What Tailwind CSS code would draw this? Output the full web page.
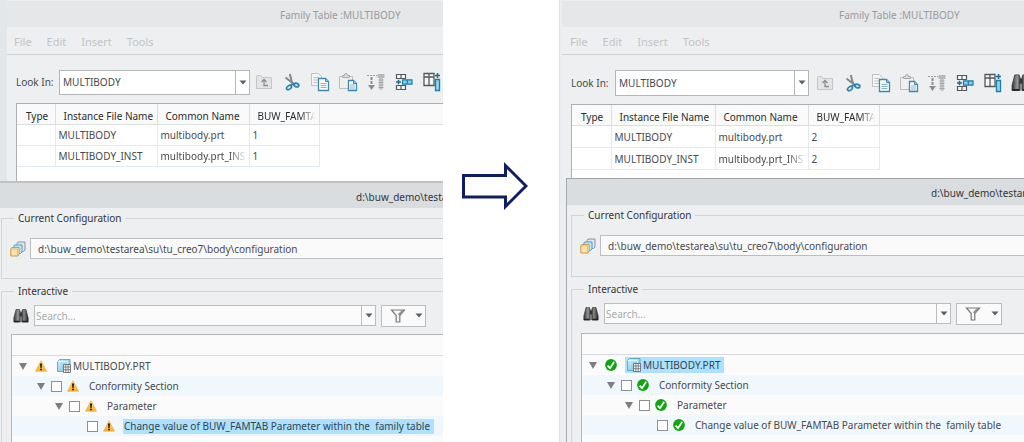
<!DOCTYPE html>
<html lang="en">
<head>
<meta charset="utf-8">
<title>Family Table: before and after</title>
<script src="https://cdn.jsdelivr.net/npm/@tailwindcss/browser@4"></script>
</head>
<body class="bg-white font-['Noto_Sans',sans-serif] text-[10px] leading-4 text-[#484a4c]">

<svg class="absolute size-0" aria-hidden="true">
  <defs>
    <linearGradient id="cube" x1="0" y1="0" x2="1" y2="1"><stop offset="0" stop-color="#d3f1fa"/><stop offset="1" stop-color="#6cc0df"/></linearGradient>
    <linearGradient id="metal" x1="0" y1="0" x2="1" y2="0"><stop offset="0" stop-color="#333"/><stop offset=".3" stop-color="#999"/><stop offset=".5" stop-color="#222"/><stop offset=".7" stop-color="#888"/><stop offset="1" stop-color="#222"/></linearGradient>
    <linearGradient id="amber" x1="0" y1="0" x2="0" y2="1"><stop offset="0" stop-color="#ffd978"/><stop offset="1" stop-color="#fbae2c"/></linearGradient>
  </defs>
  <symbol id="i-folder" viewBox="0 0 18 18"><path d="M1.500 15.500V3.500q0-1 1-1h3l1.500 2h9.500v11z" fill="#e4e5e6" stroke="#c3c5c7"/><path d="M6.500 9L9 6.500 11.500 9M9 7v5.500h4" fill="none" stroke="#8b8d8f" stroke-width="1.300"/></symbol>
  <symbol id="i-cut" viewBox="0 0 18 18"><path d="M6.800 1L9.500 11.500M2.500 4.500L12 12" stroke="#85898c" stroke-width="2" fill="none"/><ellipse cx="13.300" cy="12" rx="2.600" ry="1.700" fill="none" stroke="#2b83ab" stroke-width="1.700" transform="rotate(20 13.300 12)"/><ellipse cx="6" cy="14.500" rx="2.800" ry="1.700" fill="none" stroke="#2b83ab" stroke-width="1.700" transform="rotate(-35 6 14.500)"/><path d="M7.500 12.500L11 10.500" stroke="#2b83ab" stroke-width="1.500"/></symbol>
  <symbol id="i-copy" viewBox="0 0 20 20"><path d="M1.500 1.500h7l3 3v9h-10z" fill="#f5f5f5" stroke="#bfc1c3"/><path d="M3.500 5.500h5M3.500 8h5M3.500 10.500h5" stroke="#bfc1c3"/><path d="M8.500 6.500h7l3 3v9h-10z" fill="#fff" stroke="#3f88ab" stroke-width="1.300"/><path d="M15.500 6.500v3h3" fill="#9fd4ea" stroke="#3f88ab"/><path d="M10.500 11.500h6M10.500 13.500h6M10.500 15.500h6" stroke="#86b2c9"/></symbol>
  <symbol id="i-paste" viewBox="0 0 20 20"><path d="M1.500 4.500h13v12h-13z" fill="#f0f0f0" stroke="#bcbec0"/><path d="M4.500 5.500v-2h2q0-2 1.500-2t1.500 2h2v2z" fill="#ddd" stroke="#a8aaac"/><path d="M10.500 8.500h5l3 3v7h-8z" fill="#fff" stroke="#3f88ab" stroke-width="1.300"/><path d="M15.500 8.500v3h3" fill="#9fd4ea" stroke="#3f88ab"/><path d="M12 13h5M12 15h5M12 17h5" stroke="#86b2c9"/></symbol>
  <symbol id="i-bolt" viewBox="0 0 20 20"><path d="M1 3.500h10" stroke="#9a9c9e" stroke-dasharray="2 1"/><path d="M5.500 5v8" stroke="#8d8f91" stroke-width="2" stroke-dasharray="3 1"/><path d="M2 13h7l-3.500 5z" fill="#8d8f91"/><path d="M11.500 2h7v4h-7z" fill="#b6b8ba"/><path d="M13 6h4v11l-2 1.500-2-1.500z" fill="#c5c7c9"/><path d="M12.500 8h5M12.500 10.500h5M12.500 13h5M12.500 15.500h5" stroke="#a3a5a7"/></symbol>
  <symbol id="i-row" viewBox="0 0 18 18"><path d="M1.500 1.500h9v4h-9zM6 1.500v4M1.500 12.500h9v4h-9zM6 12.500v4" fill="#f7f7f7" stroke="#55585a" stroke-width="1.200"/><path d="M7.500 6.800h9.500v4.400H7.500zM12.300 6.800v4.400" fill="#7fd0ef" stroke="#1f7da6" stroke-width="1.200"/><path d="M1 9h5M3.500 6.800v4.400" stroke="#1c6e94" stroke-width="1.600"/></symbol>
  <symbol id="i-col" viewBox="0 0 18 20"><path d="M1 1.500h10v12H1zM1 5h10M6 1.500v12" fill="#f7f7f7" stroke="#55585a" stroke-width="1.300"/><path d="M12.500 7.500h4v11h-4z" fill="#8fd8f4" stroke="#1f7da6" stroke-width="1.300"/><path d="M12 3.500h5M14.500 1v5" stroke="#1c6e94" stroke-width="1.600"/></symbol>
  <symbol id="i-find" viewBox="0 0 16 16"><path d="M3 1.500h3.500l.8 2.500v10H.8V10zM13 1.500H9.500L8.700 4v10h6.500v-4z" fill="url(#metal)" stroke="#333" stroke-width=".6"/><path d="M7 4.500h2v4H7z" fill="#333"/><path d="M1 13.500h5.500M9.500 13.500h5.500" stroke="#222" stroke-width="1.500"/></symbol>
  <symbol id="i-stack" viewBox="0 0 16 16"><path d="M8 1h7v8l-1.500 1.500H7V2.500z" fill="#dfe5ea" stroke="#8696a5"/><path d="M4.500 4h7.500v7l-1.500 1.500H4V5z" fill="#bfe8f6" stroke="#45a3c9"/><path d="M.8 7.500L2 6.500h7.200V13l-1.200 2H.8z" fill="#fbe3ae" stroke="#c99a4c"/><path d="M1 8h6.500v6.500" fill="none" stroke="#dcb36c" stroke-width=".8"/></symbol>
  <symbol id="i-filter" viewBox="0 0 16 14"><path d="M1.500 1h13L9.800 6.500V13H6.200V6.500z" fill="#f8f8f8" stroke="#77797b" stroke-width="1.200"/><path d="M8.600 6L13 1.500" stroke="#8f9193" stroke-width="2"/></symbol>
  <symbol id="i-down" viewBox="0 0 8 5"><path d="M.5.500h7L4 4.500z" fill="#5d5f61"/></symbol>
  <symbol id="i-open" viewBox="0 0 8 7"><path d="M0 0h8L4 7z" fill="#7c7f81"/></symbol>
  <symbol id="i-warn" viewBox="0 0 12 12"><path d="M6 .8L11.500 11.200H.5z" fill="url(#amber)" stroke="#f0b13c" stroke-width=".7" stroke-linejoin="round"/><path d="M4.900 3.500h2.200L6.600 8H5.400z" fill="#2a2212"/><circle cx="6" cy="9.600" r="1" fill="#2a2212"/></symbol>
  <symbol id="i-ok" viewBox="0 0 12 12"><circle cx="6" cy="6" r="5.900" fill="#12a512"/><path d="M2.600 6.600L5 9.200 9.200 2.800" fill="none" stroke="#fff" stroke-width="1.700"/></symbol>
  <symbol id="i-part" viewBox="0 0 14 14"><path d="M.5 2.500l2-2h10.500v10l-2 2H.5z" fill="url(#cube)" stroke="#4d9cba" stroke-width=".8"/><path d="M.5 2.500h10v10" fill="none" stroke="#e8f9ff" stroke-width=".8"/><path d="M6.500 5.500h7v8h-7z" fill="#f6f6f6" stroke="#6b6d6f" stroke-width=".9"/><path d="M6.500 8h7M6.500 10.700h7M8.800 5.500v8M11.200 5.500v8" stroke="#6b6d6f" stroke-width=".8"/></symbol>
</svg>

<main class="grid min-h-screen grid-cols-[443fr_116fr_465fr]">

  <!-- Before -->
  <section class="flex min-w-0 flex-col overflow-hidden bg-[#e4e7ea]" aria-label="Before">
    <div class="ml-[7px] flex h-[181px] flex-col border-t border-[#eceef0] bg-[#eeeff1]">
      <h2 class="h-[26px] shrink-0 bg-[#e6e7e9] pl-[273px] leading-7 whitespace-nowrap text-[#999b9d]">Family Table :MULTIBODY</h2>
      <nav class="flex h-7 shrink-0 items-center gap-[15px] border-b border-[#cfd1d3] pl-[7px] pt-0.5 text-[11px] text-[#c2c4c6]">
        <a href="#">File</a><a href="#">Edit</a><a href="#">Insert</a><a href="#">Tools</a>
      </nav>
      <div class="flex h-12 shrink-0 items-center pl-[9px] pt-1.5 whitespace-nowrap">
        <label for="look-a" class="w-[43px] shrink-0">Look In:</label>
        <div class="relative h-[25px] w-[191px] shrink-0 border border-[#b4b6b8] bg-white">
          <select id="look-a" class="h-full w-full appearance-none pl-[3px] pr-4 outline-none"><option>MULTIBODY</option></select>
          <span class="pointer-events-none absolute inset-y-0 right-0 flex w-3.5 items-center justify-center border-l border-[#b4b6b8]"><svg class="h-[5px] w-2"><use href="#i-down"/></svg></span>
        </div>
        <div class="flex shrink-0 items-center gap-2 pl-1">
          <button aria-label="Up" class="flex w-5 justify-center"><svg class="size-[18px]"><use href="#i-folder"/></svg></button>
          <button aria-label="Cut" class="flex w-5 justify-center"><svg class="size-[18px]"><use href="#i-cut"/></svg></button>
          <button aria-label="Copy" class="flex w-5 justify-center"><svg class="size-5"><use href="#i-copy"/></svg></button>
          <button aria-label="Paste" class="flex w-5 justify-center"><svg class="size-5"><use href="#i-paste"/></svg></button>
          <button aria-label="Fastener" class="flex w-5 justify-center"><svg class="size-5"><use href="#i-bolt"/></svg></button>
          <button aria-label="Insert row" class="flex w-5 justify-center"><svg class="size-[18px]"><use href="#i-row"/></svg></button>
          <button aria-label="Insert column" class="flex w-5 justify-center"><svg class="h-5 w-[18px]"><use href="#i-col"/></svg></button>
        </div>
      </div>
      <div class="ml-[9px] flex-1 overflow-hidden border-t border-l border-[#adafb1] bg-white">
        <table class="w-full table-fixed border-collapse text-left whitespace-nowrap">
          <colgroup><col class="w-[38px]"><col class="w-[102px]"><col class="w-[92px]"><col class="w-[70px]"><col></colgroup>
          <thead class="bg-[#fafafa] text-[#2b2d2f]"><tr class="h-5 border-b border-[#dcdfe2]">
            <th class="border-r border-[#dcdfe2] pt-1 pl-[9px] font-normal">Type</th>
            <th class="border-r border-[#dcdfe2] pt-1 pl-2 font-normal">Instance File Name</th>
            <th class="border-r border-[#dcdfe2] pt-1 pl-2 font-normal">Common Name</th>
            <th class="border-r border-[#dcdfe2] pt-1 pl-2 font-normal"><div class="mr-1 overflow-hidden mask-[linear-gradient(to_right,black_75%,transparent)]">BUW_FAMTAB</div></th>
            <th></th></tr></thead>
          <tbody>
            <tr class="h-[21px]"><td class="border-r border-b border-[#e3eaf0]"></td><td class="border-r border-b border-[#e3eaf0] pl-[3px]">MULTIBODY</td><td class="border-r border-b border-[#e3eaf0] pl-[3px]">multibody.prt</td><td class="border-r border-b border-[#e3eaf0] pl-[3px]">1</td><td></td></tr>
            <tr class="h-[21px]"><td class="border-r border-b border-[#e3eaf0]"></td><td class="border-r border-b border-[#e3eaf0] pl-[3px]">MULTIBODY_INST</td><td class="border-r border-b border-[#e3eaf0] pl-[3px]"><div class="mr-0.5 overflow-hidden mask-[linear-gradient(to_right,black_80%,transparent)]">multibody.prt_INST</div></td><td class="border-r border-b border-[#e3eaf0] pl-[3px]">1</td><td></td></tr>
          </tbody>
        </table>
      </div>
    </div>
    <div class="flex flex-1 flex-col border-t-2 border-[#bfc1c2] bg-[#eeeff1] whitespace-nowrap">
      <h2 class="h-[25px] bg-[#d9dddf] pl-[356px] leading-7 text-[#333537]">d:\buw_demo\testarea</h2>
      <fieldset class="mt-0.5 ml-px h-[69px] min-w-0 border border-r-0 border-[#d2d5d8] pl-2">
        <legend class="ml-1 px-1 text-[#333537]">Current Configuration</legend>
        <div class="mt-3 flex items-center">
          <svg class="size-4" aria-hidden="true"><use href="#i-stack"/></svg>
          <input aria-label="Configuration path" value="d:\buw_demo\testarea\su\tu_creo7\body\configuration" class="ml-1 h-[21px] min-w-0 flex-1 border border-r-0 border-[#bbbdbf] bg-[#fafafa] pl-[7px] outline-none">
        </div>
      </fieldset>
      <fieldset class="mt-1 ml-px flex min-w-0 flex-1 flex-col border-t border-l border-[#d2d5d8]">
        <legend class="ml-3 px-1 text-[#333537]">Interactive</legend>
        <div class="mt-1.5 flex h-[21px] items-center pr-[17px] pl-[11px]">
          <svg class="mr-[5px] size-4 shrink-0" aria-hidden="true"><use href="#i-find"/></svg>
          <div class="flex h-[21px] flex-1 border border-[#bbbdbf] bg-[#fbfbfb]">
            <input aria-label="Search" placeholder="Search..." class="min-w-0 flex-1 pl-px outline-none placeholder:text-[#a9abad]">
            <button aria-label="Search history" class="flex w-3.5 items-center justify-center border-l border-[#bbbdbf]"><svg class="h-[5px] w-2"><use href="#i-down"/></svg></button>
          </div>
          <button aria-label="Filter" class="ml-[5px] flex h-[22px] w-[45px] shrink-0 items-center justify-between border border-[#bbbdbf] bg-[#fafafa] pr-0.5 pl-2"><svg class="h-3.5 w-4"><use href="#i-filter"/></svg><svg class="h-[5px] w-2"><use href="#i-down"/></svg></button>
        </div>
        <div class="mt-2 ml-[9px] flex-1 border-t border-l border-[#b4b6b8] bg-[#fbfbfb]">
          <div class="h-[21px] border-b border-[#d8dadc]"></div>
          <ul>
            <li class="flex h-5 items-center pl-[7px]"><svg class="mr-2 h-[7px] w-2 shrink-0"><use href="#i-open"/></svg><svg class="mr-2.5 size-3 shrink-0"><use href="#i-warn"/></svg><svg class="mr-0.5 size-3.5 shrink-0"><use href="#i-part"/></svg>MULTIBODY.PRT</li>
            <li class="flex h-5 items-center bg-[#f0f8fe] pl-[25px]"><svg class="mr-1.5 h-[7px] w-2 shrink-0"><use href="#i-open"/></svg><input type="checkbox" aria-label="Conformity Section" class="mr-[5px] size-[11px] shrink-0 appearance-none border border-[#8d8f91] bg-white"><svg class="mr-2.5 size-3 shrink-0"><use href="#i-warn"/></svg>Conformity Section</li>
            <li class="flex h-5 items-center pl-[43px]"><svg class="mr-1.5 h-[7px] w-2 shrink-0"><use href="#i-open"/></svg><input type="checkbox" aria-label="Parameter" class="mr-[5px] size-[11px] shrink-0 appearance-none border border-[#8d8f91] bg-white"><svg class="mr-2.5 size-3 shrink-0"><use href="#i-warn"/></svg>Parameter</li>
            <li class="flex h-5 items-center bg-[#f0f8fe] pl-[75px]"><input type="checkbox" aria-label="Change value" class="mr-[5px] size-[11px] shrink-0 appearance-none border border-[#8d8f91] bg-white"><svg class="mr-2 size-3 shrink-0"><use href="#i-warn"/></svg><span class="bg-[#ade1ff] pr-1 pl-px leading-[15px] whitespace-pre text-[#33444f]">Change value of BUW_FAMTAB Parameter within the  family table</span></li>
          </ul>
        </div>
      </fieldset>
    </div>
  </section>

  <div class="flex h-[372px] items-center pl-[18px]">
    <svg class="h-[50px] w-[67px]" viewBox="0 0 67 50" role="img" aria-label="becomes"><path d="M2.500 14.500H44.500V4.500L65 25L44.500 45.500V36H2.500z" fill="#fff" stroke="#101c66" stroke-width="3"/></svg>
  </div>

  <!-- After -->
  <section class="flex min-w-0 flex-col overflow-hidden border-l border-[#dddfe3] bg-[#ebedf0]" aria-label="After">
    <div class="ml-0.5 flex h-[178px] flex-col border-t border-[#eceef0] bg-[#eeeff1]">
      <h2 class="h-[26px] shrink-0 bg-[#e6e7e9] pl-[277px] leading-7 whitespace-nowrap text-[#999b9d]">Family Table :MULTIBODY</h2>
      <nav class="flex h-7 shrink-0 items-center gap-[15px] border-b border-[#cfd1d3] pl-2 pt-0.5 text-[11px] text-[#c2c4c6]">
        <a href="#">File</a><a href="#">Edit</a><a href="#">Insert</a><a href="#">Tools</a>
      </nav>
      <div class="flex h-[49px] shrink-0 items-center pl-[9px] pt-1.5 whitespace-nowrap">
        <label for="look-b" class="w-11 shrink-0">Look In:</label>
        <div class="relative h-[26px] w-[194px] shrink-0 border border-[#b4b6b8] bg-white">
          <select id="look-b" class="h-full w-full appearance-none pl-[3px] pr-4 outline-none"><option>MULTIBODY</option></select>
          <span class="pointer-events-none absolute inset-y-0 right-0 flex w-3.5 items-center justify-center border-l border-[#b4b6b8]"><svg class="h-[5px] w-2"><use href="#i-down"/></svg></span>
        </div>
        <div class="flex shrink-0 items-center gap-2 pl-1.5">
          <button aria-label="Up" class="flex w-5 justify-center"><svg class="size-[18px]"><use href="#i-folder"/></svg></button>
          <button aria-label="Cut" class="flex w-5 justify-center"><svg class="size-[18px]"><use href="#i-cut"/></svg></button>
          <button aria-label="Copy" class="flex w-5 justify-center"><svg class="size-5"><use href="#i-copy"/></svg></button>
          <button aria-label="Paste" class="flex w-5 justify-center"><svg class="size-5"><use href="#i-paste"/></svg></button>
          <button aria-label="Fastener" class="flex w-5 justify-center"><svg class="size-5"><use href="#i-bolt"/></svg></button>
          <button aria-label="Insert row" class="flex w-5 justify-center"><svg class="size-[18px]"><use href="#i-row"/></svg></button>
          <button aria-label="Insert column" class="flex w-5 justify-center"><svg class="h-5 w-[18px]"><use href="#i-col"/></svg></button>
          <button aria-label="Find" class="flex w-5 justify-center"><svg class="size-5"><use href="#i-find"/></svg></button>
        </div>
      </div>
      <div class="ml-[9px] flex-1 overflow-hidden border-t border-l border-[#adafb1] bg-white">
        <table class="w-full table-fixed border-collapse text-left whitespace-nowrap">
          <colgroup><col class="w-[39px]"><col class="w-[104px]"><col class="w-[93px]"><col class="w-[71px]"><col></colgroup>
          <thead class="bg-[#fafafa] text-[#2b2d2f]"><tr class="h-5 border-b border-[#dcdfe2]">
            <th class="border-r border-[#dcdfe2] pt-1 pl-[9px] font-normal">Type</th>
            <th class="border-r border-[#dcdfe2] pt-1 pl-2 font-normal">Instance File Name</th>
            <th class="border-r border-[#dcdfe2] pt-1 pl-2 font-normal">Common Name</th>
            <th class="border-r border-[#dcdfe2] pt-1 pl-2 font-normal"><div class="mr-1 overflow-hidden mask-[linear-gradient(to_right,black_75%,transparent)]">BUW_FAMTAB</div></th>
            <th></th></tr></thead>
          <tbody>
            <tr class="h-[22px]"><td class="border-r border-b border-[#e3eaf0]"></td><td class="border-r border-b border-[#e3eaf0] pl-[3px]">MULTIBODY</td><td class="border-r border-b border-[#e3eaf0] pl-[3px]">multibody.prt</td><td class="border-r border-b border-[#e3eaf0] pl-[3px]">2</td><td></td></tr>
            <tr class="h-[22px]"><td class="border-r border-b border-[#e3eaf0]"></td><td class="border-r border-b border-[#e3eaf0] pl-[3px]">MULTIBODY_INST</td><td class="border-r border-b border-[#e3eaf0] pl-[3px]"><div class="mr-0.5 overflow-hidden mask-[linear-gradient(to_right,black_80%,transparent)]">multibody.prt_INST</div></td><td class="border-r border-b border-[#e3eaf0] pl-[3px]">2</td><td></td></tr>
          </tbody>
        </table>
      </div>
    </div>
    <div class="ml-1.5 flex flex-1 flex-col border-t border-l border-[#a5a7a9] bg-[#eeeff1] whitespace-nowrap">
      <h2 class="h-[26px] bg-[#d9dddf] pl-[364px] leading-7 text-[#333537]">d:\buw_demo\testarea</h2>
      <fieldset class="mt-0.5 ml-1 h-[70px] min-w-0 border border-r-0 border-[#d2d5d8] pl-2">
        <legend class="ml-1 px-1 text-[#333537]">Current Configuration</legend>
        <div class="mt-3 flex items-center">
          <svg class="size-4" aria-hidden="true"><use href="#i-stack"/></svg>
          <input aria-label="Configuration path" value="d:\buw_demo\testarea\su\tu_creo7\body\configuration" class="ml-1 h-[21px] min-w-0 flex-1 border border-r-0 border-[#bbbdbf] bg-[#fafafa] pl-[7px] outline-none">
        </div>
      </fieldset>
      <fieldset class="mt-1 ml-1 flex min-w-0 flex-1 flex-col border-t border-l border-[#d2d5d8]">
        <legend class="ml-3 px-1 text-[#333537]">Interactive</legend>
        <div class="mt-1.5 flex h-[21px] items-center pr-[22px] pl-[11px]">
          <svg class="mr-[5px] size-4 shrink-0" aria-hidden="true"><use href="#i-find"/></svg>
          <div class="flex h-[21px] flex-1 border border-[#bbbdbf] bg-[#fbfbfb]">
            <input aria-label="Search" placeholder="Search..." class="min-w-0 flex-1 pl-px outline-none placeholder:text-[#a9abad]">
            <button aria-label="Search history" class="flex w-3.5 items-center justify-center border-l border-[#bbbdbf]"><svg class="h-[5px] w-2"><use href="#i-down"/></svg></button>
          </div>
          <button aria-label="Filter" class="ml-[5px] flex h-[22px] w-[46px] shrink-0 items-center justify-between border border-[#bbbdbf] bg-[#fafafa] pr-0.5 pl-2"><svg class="h-3.5 w-4"><use href="#i-filter"/></svg><svg class="h-[5px] w-2"><use href="#i-down"/></svg></button>
        </div>
        <div class="mt-[9px] ml-[9px] flex-1 border-t border-l border-[#b4b6b8] bg-[#fbfbfb]">
          <div class="h-[21px] border-b border-[#d8dadc]"></div>
          <ul>
            <li class="flex h-5 items-center pl-[7px]"><svg class="mr-2 h-[7px] w-2 shrink-0"><use href="#i-open"/></svg><svg class="mr-2 size-3 shrink-0"><use href="#i-ok"/></svg><span class="flex h-4 items-center bg-[#ade1ff] pr-1 pl-0.5 text-[#33444f]"><svg class="mr-0.5 size-3.5 shrink-0"><use href="#i-part"/></svg>MULTIBODY.PRT</span></li>
            <li class="flex h-5 items-center bg-[#f0f8fe] pl-[25px]"><svg class="mr-1.5 h-[7px] w-2 shrink-0"><use href="#i-open"/></svg><input type="checkbox" aria-label="Conformity Section" class="mr-[5px] size-[11px] shrink-0 appearance-none border border-[#8d8f91] bg-white"><svg class="mr-2.5 size-3 shrink-0"><use href="#i-ok"/></svg>Conformity Section</li>
            <li class="flex h-5 items-center pl-[43px]"><svg class="mr-1.5 h-[7px] w-2 shrink-0"><use href="#i-open"/></svg><input type="checkbox" aria-label="Parameter" class="mr-[5px] size-[11px] shrink-0 appearance-none border border-[#8d8f91] bg-white"><svg class="mr-2.5 size-3 shrink-0"><use href="#i-ok"/></svg>Parameter</li>
            <li class="flex h-5 items-center bg-[#f0f8fe] pl-[75px]"><input type="checkbox" aria-label="Change value" class="mr-[5px] size-[11px] shrink-0 appearance-none border border-[#8d8f91] bg-white"><svg class="mr-2.5 size-3 shrink-0"><use href="#i-ok"/></svg><span class="whitespace-pre">Change value of BUW_FAMTAB Parameter within the  family table</span></li>
          </ul>
        </div>
      </fieldset>
    </div>
  </section>
</main>
</body>
</html>
